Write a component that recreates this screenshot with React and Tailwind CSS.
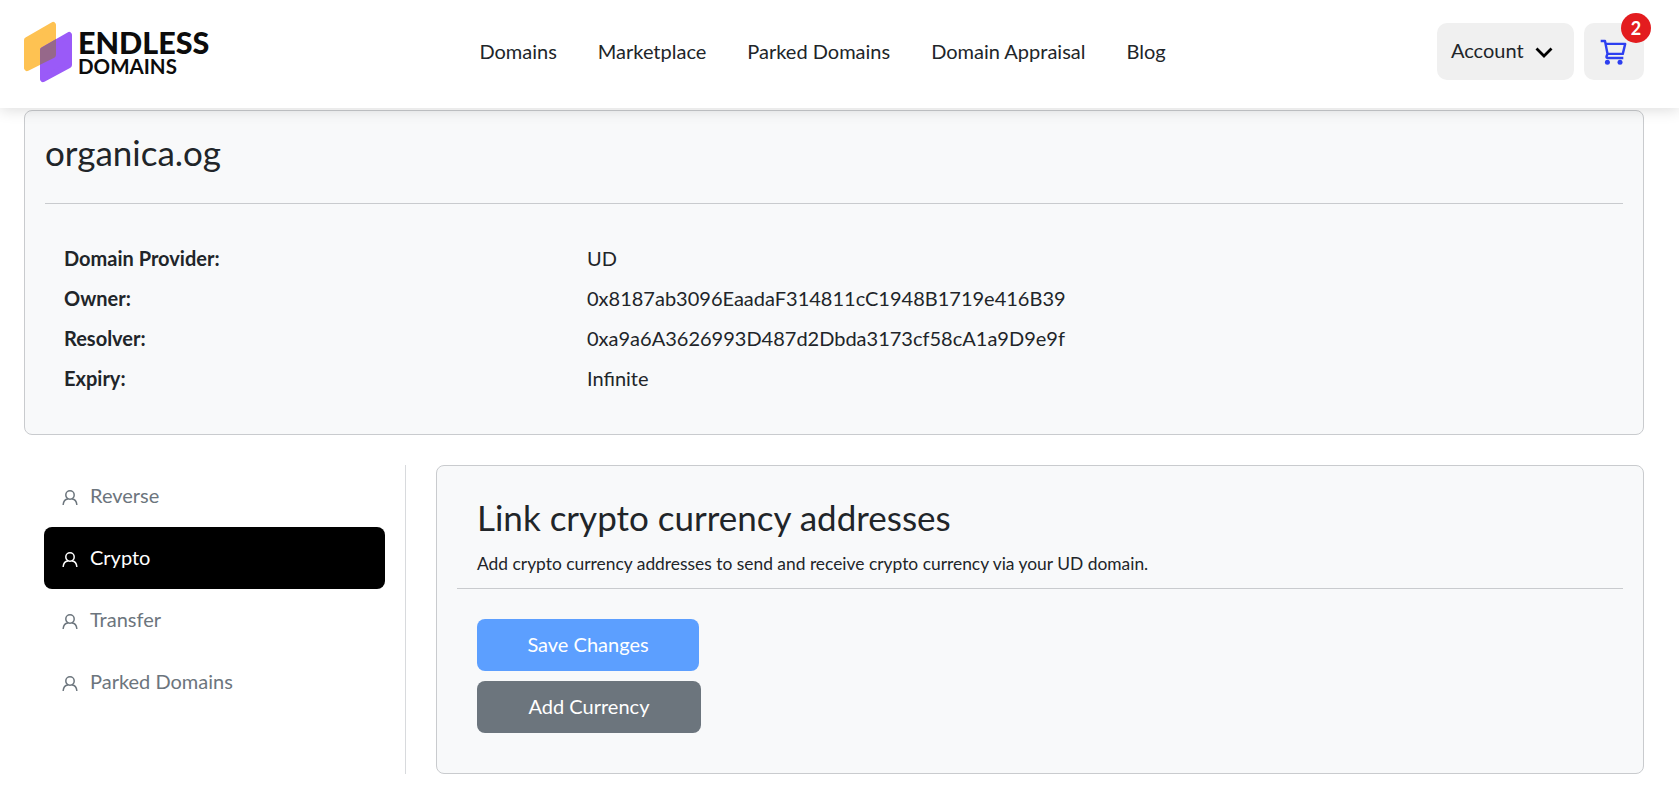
const navLinks = ['Domains', 'Marketplace', 'Parked Domains', 'Domain Appraisal', 'Blog'];

const details = [
  ['Domain Provider:', 'UD'],
  ['Owner:', '0x8187ab3096EaadaF314811cC1948B1719e416B39'],
  ['Resolver:', '0xa9a6A3626993D487d2Dbda3173cf58cA1a9D9e9f'],
  ['Expiry:', 'Infinite'],
];

const sideItems = ['Reverse', 'Crypto', 'Transfer', 'Parked Domains'];

function Logo() {
  return (
    <div className="flex items-center">
      <svg width="50" height="62" viewBox="0 0 50 62" className="shrink-0">
        <defs>
          <mask id="logo-overlap">
            <path d="M3 19 L29 4 V34 L3 47 Z" fill="white" stroke="white" strokeWidth="6" strokeLinejoin="round" />
          </mask>
        </defs>
        <path d="M3 19 L29 4 V34 L3 47 Z" fill="#fec252" stroke="#fec252" strokeWidth="6" strokeLinejoin="round" />
        <path d="M19 29 L45 14 V44 L19 58 Z" fill="#9a5af8" stroke="#9a5af8" strokeWidth="6" strokeLinejoin="round" />
        <path d="M19 29 L45 14 V44 L19 58 Z" fill="#96688a" stroke="#96688a" strokeWidth="6" strokeLinejoin="round" mask="url(#logo-overlap)" />
      </svg>
      <div className="ml-[4px] flex flex-col font-['Lato',sans-serif] text-[#0c0c0c]">
        <span className="text-[30.5px] leading-[29px] font-black">ENDLESS</span>
        <span className="text-[20.5px] leading-[18px] font-bold">DOMAINS</span>
      </div>
    </div>
  );
}

function CartIcon() {
  return (
    <svg width="28" height="28" viewBox="0 0 28 28" fill="none" stroke="#2d3ff0" strokeWidth="2.4" strokeLinejoin="round" className="shrink-0">
      <path d="M.7 3H5L7.5 15.8 6.5 18.5Q6.2 20 8 20H23.3" />
      <path d="M5.5 5.9H25.2L22.8 15.9H7.5" />
      <circle cx="7.4" cy="24.2" r="2.5" fill="#2d3ff0" stroke="none" />
      <circle cx="20" cy="24.2" r="2.5" fill="#2d3ff0" stroke="none" />
    </svg>
  );
}

function UserIcon() {
  return (
    <svg width="16" height="16" viewBox="0 0 16 16" fill="none" stroke="currentColor" strokeWidth="1.5" className="mt-[4px] shrink-0">
      <circle cx="8" cy="6" r="4.2" />
      <path d="M1.2 15.5c.3-3.4 2.6-5.4 4.6-5.6M14.8 15.5c-.3-3.4-2.6-5.4-4.6-5.6" strokeLinecap="round" />
    </svg>
  );
}

export default function App() {
  return (
    <div className="min-h-[799px] overflow-hidden bg-white font-['Lato',sans-serif] text-[#212529]">
      <header className="relative z-10 flex h-[108px] items-center justify-between bg-white pr-[35px] pb-[5px] pl-[24px] shadow-[0_2px_14px_rgba(0,0,0,0.14)]">
        <div className="w-[300px]">
          <Logo />
        </div>
        <nav className="-mt-[2px] -ml-[116px] flex items-center gap-[41px] text-[20px] text-[#212529]">
          {navLinks.map((link) => (
            <a key={link} href="#">{link}</a>
          ))}
        </nav>
        <div className="flex items-center gap-[10px]">
          <button type="button" className="flex h-[57px] w-[137px] items-center gap-[11px] rounded-[10px] bg-[#f0f0f0] pb-[3px] pl-[14px] text-[20px] text-[#212529]">
            Account
            <svg width="18" height="11" viewBox="0 0 18 11" fill="none" stroke="black" strokeWidth="2.8" className="mt-[4px] shrink-0">
              <path d="M1.5 1.5 9 9l7.5-7.5" />
            </svg>
          </button>
          <div className="relative flex h-[57px] w-[60px] items-center justify-center rounded-[10px] bg-[#f0f0f0]">
            <CartIcon />
            <span className="absolute -top-[10px] -right-[7px] flex h-[30px] w-[30px] items-center justify-center rounded-full bg-[#e31c1f] text-[18px] font-bold text-white">
              2
            </span>
          </div>
        </div>
      </header>

      <main className="pt-[2px] pr-[35px] pl-[24px]">
        <section className="h-[325px] rounded-[8px] border border-[#c9cbce] bg-[#f8f9fa] px-[20px]">
          <h1 className="flex h-[82px] items-center text-[35px] leading-none font-normal">organica.og</h1>
          <hr className="mt-[10px] border-[#c9cbce]" />
          <dl className="mt-[34px] px-[19px] text-[20px]">
            {details.map(([label, value]) => (
              <div key={label} className="flex h-[40px] items-center">
                <dt className="w-[523px] font-bold">{label}</dt>
                <dd>{value}</dd>
              </div>
            ))}
          </dl>
        </section>

        <div className="mt-[30px] flex">
          <aside className="h-[309px] w-[382px] border-r border-[#d8dadd] pr-[20px] pl-[20px]">
            {sideItems.map((item) => (
              <a
                key={item}
                href="#"
                className={
                  item === 'Crypto'
                    ? 'flex h-[62px] items-center gap-[12px] rounded-[8px] bg-black pb-[2px] pl-[18px] text-[20px] text-white'
                    : 'flex h-[62px] items-center gap-[12px] rounded-[8px] pb-[2px] pl-[18px] text-[20px] text-[#6c757d]'
                }
              >
                <UserIcon />
                {item}
              </a>
            ))}
          </aside>

          <section className="ml-[30px] h-[309px] flex-1 rounded-[8px] border border-[#c9cbce] bg-[#f8f9fa] px-[20px]">
            <h2 className="mt-[31px] ml-[20px] text-[35px] leading-[40px] font-normal">Link crypto currency addresses</h2>
            <p className="mt-[15px] ml-[20px] text-[17.4px] leading-[24px]">
              Add crypto currency addresses to send and receive crypto currency via your UD domain.
            </p>
            <hr className="mt-[12px] border-[#c9cbce]" />
            <div className="mt-[30px] ml-[20px] flex flex-col items-start gap-[10px]">
              <button type="button" className="h-[52px] w-[222px] rounded-[8px] bg-[#5c9fff] pb-[2px] text-[20px] text-white">
                Save Changes
              </button>
              <button type="button" className="h-[52px] w-[224px] rounded-[8px] bg-[#6c757d] pb-[2px] text-[20px] text-white">
                Add Currency
              </button>
            </div>
          </section>
        </div>
      </main>
    </div>
  );
}
